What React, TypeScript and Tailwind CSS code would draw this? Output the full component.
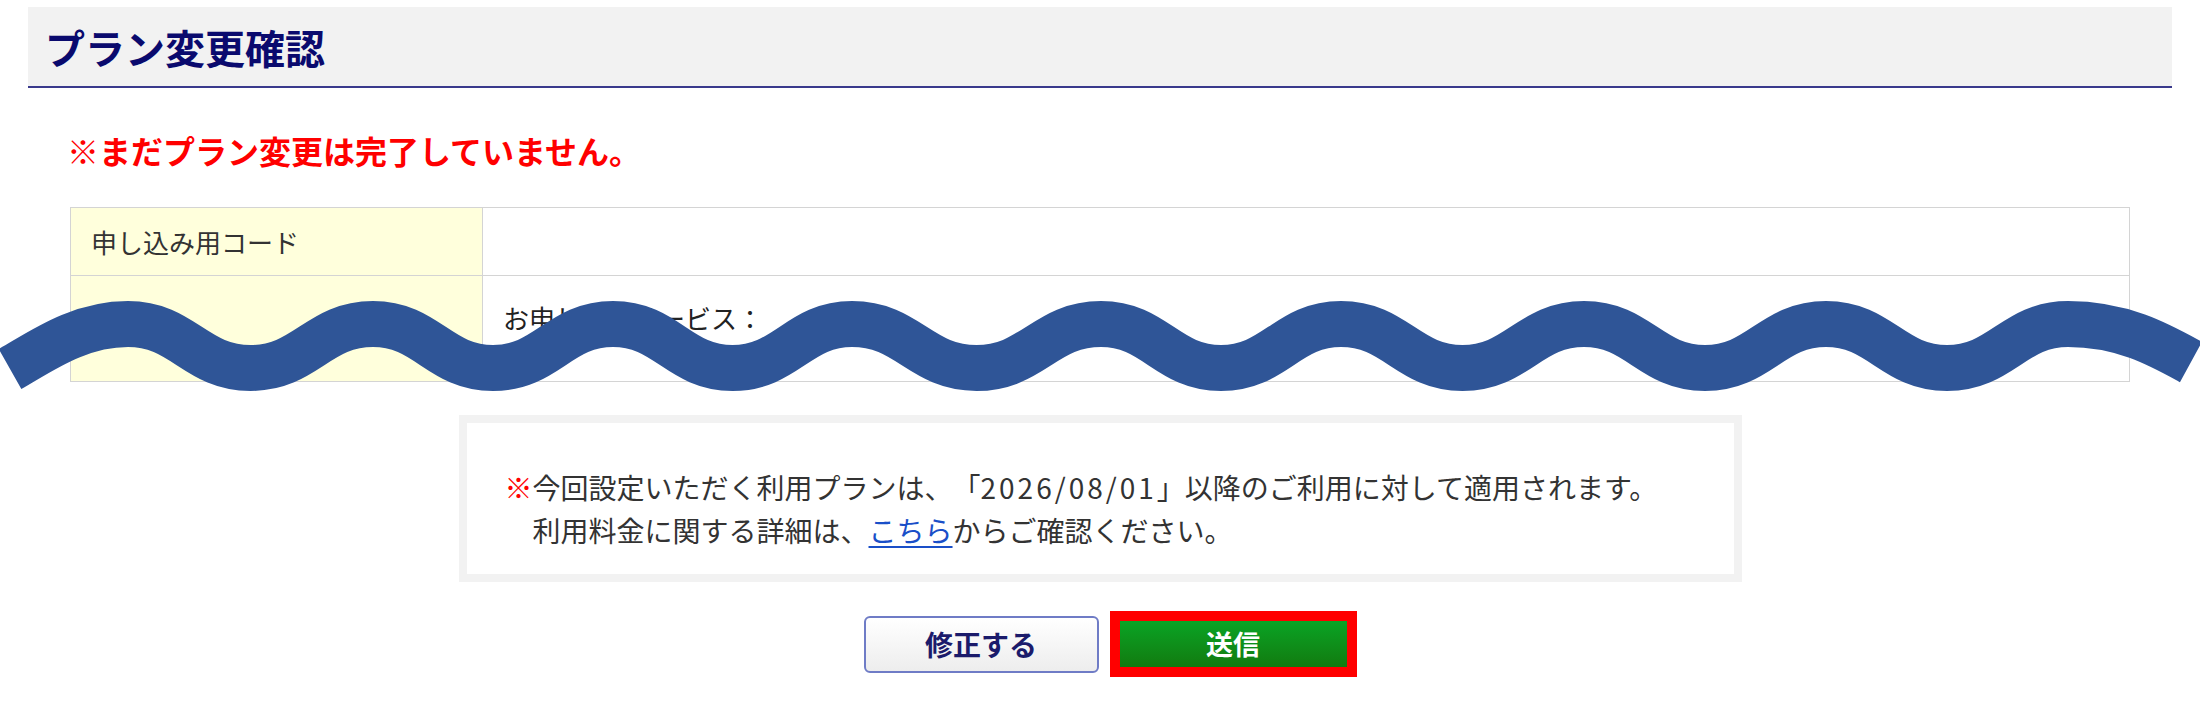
import React from "react";

// crest x positions of the hand-drawn band over the table
const crests = [128, 373, 613, 852, 1101, 1341, 1584, 1826, 2068];
const TOP = 324;
const LOW = 368;

const buildWave = () => {
  let d = `M 10 369 C 40 352, 78 ${TOP}, ${crests[0]} ${TOP}`;
  for (let i = 0; i < crests.length - 1; i++) {
    const a = crests[i];
    const b = crests[i + 1];
    const m = (a + b) / 2;
    const h = (m - a) * 0.45;
    d += ` C ${a + h} ${TOP}, ${m - h} ${LOW}, ${m} ${LOW}`;
    d += ` C ${m + h} ${LOW}, ${b - h} ${TOP}, ${b} ${TOP}`;
  }
  const last = crests[crests.length - 1];
  d += ` C ${last + 55} ${TOP}, 2160 345, 2191 362`;
  return d;
};

const Wave = () => (
  <svg
    className="pointer-events-none absolute left-0 top-0"
    width="2200"
    height="723"
    viewBox="0 0 2200 723"
  >
    <path d={buildWave()} fill="none" stroke="#2f5597" strokeWidth="46" strokeLinecap="butt" />
  </svg>
);

const App = () => {
  return (
    <div className="relative min-h-screen bg-white font-['Noto_Sans_CJK_JP','Noto_Sans',sans-serif] text-[#222] [text-spacing-trim:space-all]">
      <div className="px-[28px] pt-[7px]">
        <h1 className="flex h-[81px] items-center border-b-2 border-[#3a3a8c] bg-[#f2f2f2] pl-[17px] text-[40px] font-bold text-[#0a0a6e]">
          プラン変更確認
        </h1>
      </div>

      <p className="ml-[67px] mt-[38px] text-[32px] font-bold leading-[48px] text-[#ff0000]">
        ※まだプラン変更は完了していません。
      </p>

      <table className="mx-[70px] mt-[33px] w-[2060px] border-collapse text-[26px]">
        <tbody>
          <tr className="h-[68px]">
            <th className="w-[412px] border border-[#d4d4d4] bg-[#ffffdc] pl-[20px] text-left font-normal text-[#333]">
              申し込み用コード
            </th>
            <td className="border border-[#d4d4d4] pl-[20px]"></td>
          </tr>
          <tr className="h-[106px]">
            <th className="border border-[#d4d4d4] bg-[#ffffdc] pl-[20px] text-left font-normal text-[#333]"></th>
            <td className="border border-[#d4d4d4] pl-[20px] pt-[22px] align-top leading-[40px]">
              お申し込みサービス：
            </td>
          </tr>
        </tbody>
      </table>

      <div className="mx-auto mt-[33px] h-[167px] w-[1283px] border-[8px] border-[#f2f2f2] pl-[38px] pt-[43px] text-[28px] leading-[43px] text-[#333]">
        <p>
          <span className="text-[#ff0000]">※</span>今回設定いただく利用プランは、「
          <span className="tracking-[3px]">2026/08/01</span>」以降のご利用に対して適用されます。
        </p>
        <p className="pl-[28px]">
          利用料金に関する詳細は、
          <a href="#" className="text-[#1a4fc8] underline underline-offset-4">
            こちら
          </a>
          からご確認ください。
        </p>
      </div>

      <div className="mt-[29px] flex items-center justify-center gap-[11px] pl-[20px]">
        <button className="h-[57px] w-[235px] rounded-[6px] border-2 border-[#6f7cc6] bg-gradient-to-b from-white to-[#ededed] text-[28px] font-bold text-[#1b1b6b]">
          修正する
        </button>
        <div className="border-[10px] border-[#ff0000]">
          <button className="h-[46px] w-[227px] bg-gradient-to-b from-[#08a425] to-[#117b0f] text-[27px] font-bold text-white">
            送信
          </button>
        </div>
      </div>

      <Wave />
    </div>
  );
};

export default App;
